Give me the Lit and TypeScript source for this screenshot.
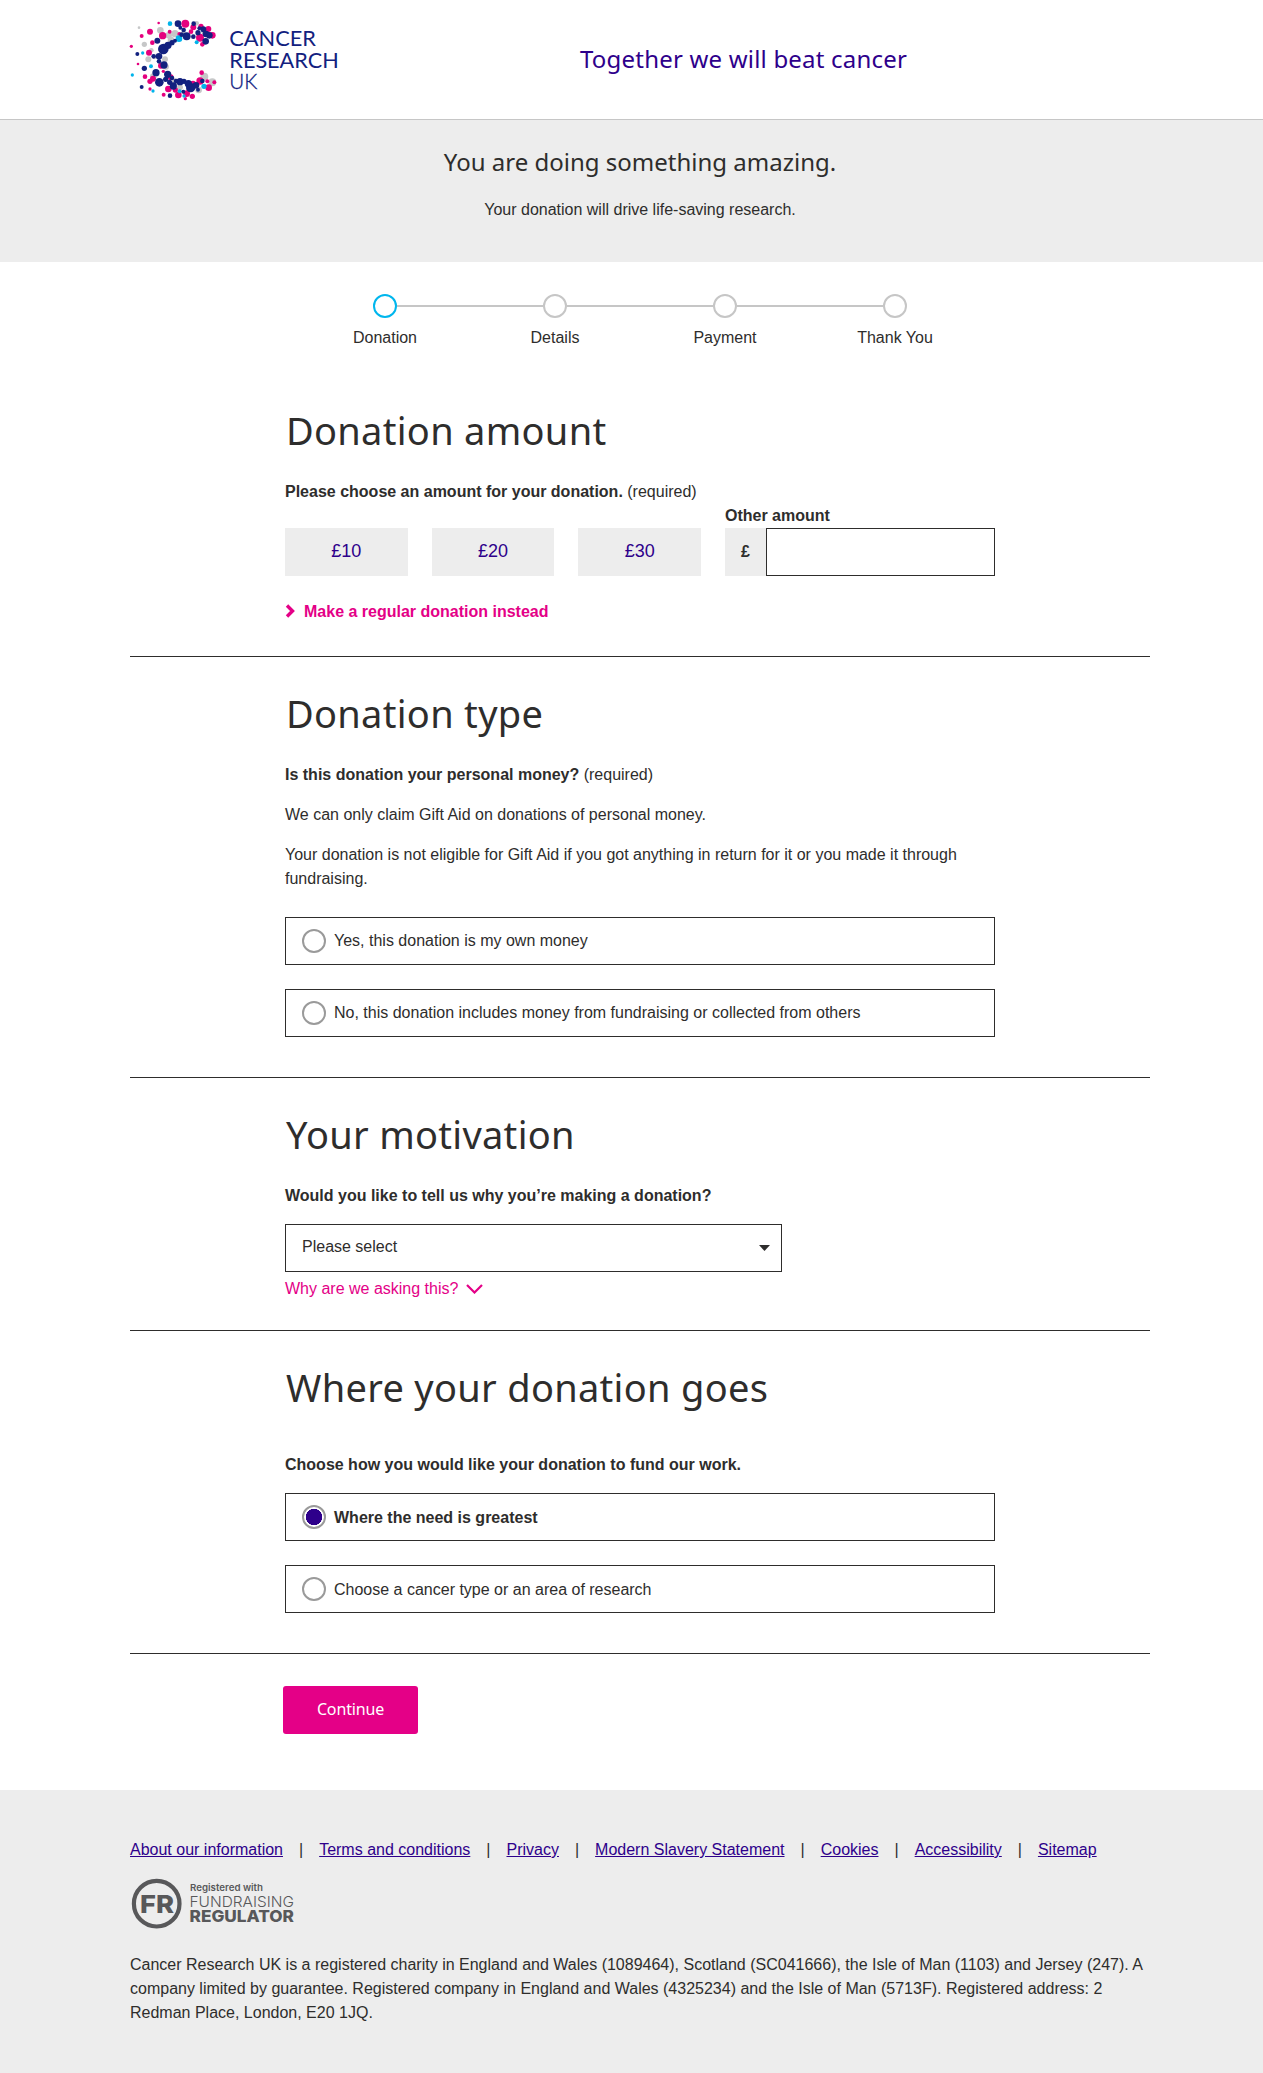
import { LitElement, html, svg, css } from "lit";
import { customElement, property } from "lit/decorators.js";

type Dot = [number, number, number];

const GREY: Dot[] = [
  [57, 53, 3], [121, 61, 9], [73, 103, 7], [85, 148, 8], [103, 141, 6], [94, 121, 6], [146, 76, 9], [165, 71, 10],
  [153, 90, 9], [135, 148, 8], [138, 170, 8], [230, 40, 6], [253, 200, 11], [277, 217, 11], [236, 240, 9],
  [100, 200, 9], [165, 214, 8], [180, 232, 8], [205, 240, 6], [253, 65, 8], [190, 70, 6],
];
const PINK: Dot[] = [
  [116, 39, 3], [65, 78, 5], [90, 65, 8], [128, 77, 10], [149, 65, 5], [97, 98, 6], [34, 109, 4], [87, 128, 8],
  [54, 162, 3], [123, 167, 8], [130, 184, 4], [75, 200, 6], [99, 206, 8], [90, 214, 7], [152, 202, 8], [196, 41, 11],
  [220, 52, 8], [243, 49, 7], [265, 57, 8], [277, 76, 9], [240, 83, 11], [247, 103, 6], [213, 65, 6], [178, 72, 5],
  [245, 188, 6], [240, 213, 10], [219, 221, 8], [266, 233, 9], [283, 217, 5], [200, 251, 9], [175, 255, 9],
  [145, 237, 9], [131, 254, 5], [90, 237, 4], [217, 259, 7], [196, 266, 4], [166, 240, 7], [262, 214, 5],
];
const CYAN: Dot[] = [
  [150, 41, 6], [177, 86, 9], [68, 129, 4], [93, 169, 5], [37, 195, 4], [99, 243, 4], [179, 244, 5], [252, 229, 7],
  [230, 97, 5], [192, 258, 4],
];
const NAVY: Dot[] = [
  [174, 41, 9], [191, 60, 6], [221, 41, 6], [200, 79, 11], [181, 53, 5], [250, 58, 8], [258, 72, 9], [268, 76, 9],
  [257, 94, 9], [234, 68, 7], [220, 80, 6], [238, 55, 5], [130, 117, 15], [144, 106, 10], [156, 98, 7], [165, 92, 5],
  [185, 74, 6], [112, 92, 8], [117, 139, 9], [52, 132, 5], [132, 165, 10], [117, 154, 6], [101, 139, 6], [73, 175, 7],
  [108, 188, 10], [143, 193, 10], [65, 231, 5], [118, 217, 12], [160, 228, 10], [149, 217, 7], [180, 215, 10],
  [192, 214, 7], [212, 233, 13], [205, 221, 10], [228, 226, 9], [247, 213, 6], [150, 257, 6], [137, 208, 7],
  [156, 204, 6], [168, 213, 6], [234, 239, 5], [190, 245, 5],
];

const dots = (list: Dot[], fill: string) =>
  svg`<g fill=${fill}>${list.map(([x, y, r]) => svg`<circle cx=${x} cy=${y} r=${r + 0.9}></circle>`)}</g>`;

@customElement("brand-logo")
export class BrandLogo extends LitElement {
  static styles = css`
    :host { display: block; width: 230px; height: 100px; }
    svg { display: block; }
    .word { font-family: Lato, "Liberation Sans", sans-serif; font-size: 64px; fill: #12217f; }
    .thin { font-weight: 300; stroke: #12217f; stroke-width: 1; }
  `;
  render() {
    return html`<svg width="230" height="100" viewBox="0 0 690 300" role="img">
      ${dots(GREY, "#c6c7c8")}${dots(PINK, "#e5007e")}${dots(CYAN, "#00b4eb")}${dots(NAVY, "#12217f")}
      <text class="word" x="328" y="107" textLength="260" lengthAdjust="spacingAndGlyphs">CANCER</text>
      <text class="word" x="328" y="173" textLength="328" lengthAdjust="spacingAndGlyphs">RESEARCH</text>
      <text class="word thin" x="328" y="237" textLength="84" lengthAdjust="spacingAndGlyphs">UK</text>
    </svg>`;
  }
}

@customElement("regulator-badge")
export class RegulatorBadge extends LitElement {
  static styles = css`
    :host { display: block; width: 166px; height: 54px; }
    svg { display: block; }
    text { font-family: Inter, "Liberation Sans", sans-serif; fill: #58585a; }
    .fr { font-size: 25px; font-weight: 800; }
    .small { font-size: 9.4px; font-weight: 600; }
    .light { font-size: 15px; font-weight: 300; }
    .heavy { font-size: 16.3px; font-weight: 800; }
  `;
  render() {
    return html`<svg width="166" height="54" viewBox="0 0 166 54" role="img">
      <circle cx="26.7" cy="26.7" r="22.8" fill="none" stroke="#58585a" stroke-width="4.2"></circle>
      <text class="fr" x="10" y="36" textLength="34" lengthAdjust="spacingAndGlyphs">FR</text>
      <text class="small" x="60" y="13.7" textLength="73" lengthAdjust="spacingAndGlyphs">Registered with</text>
      <text class="light" x="59.5" y="30" textLength="104.5" lengthAdjust="spacingAndGlyphs">FUNDRAISING</text>
      <text class="heavy" x="59.5" y="45.2" textLength="104.5" lengthAdjust="spacingAndGlyphs">REGULATOR</text>
    </svg>`;
  }
}

@customElement("progress-steps")
export class ProgressSteps extends LitElement {
  @property({ type: Number }) current = 0;
  static styles = css`
    :host { display: block; }
    .steps { display: grid; grid-template-columns: repeat(4, 170px); margin: 0; padding: 0; list-style: none; }
    .step { display: flex; flex-direction: column; align-items: center; }
    .track { display: flex; align-items: center; width: 100%; height: 24px; }
    .line { flex: 1; height: 2px; background: #c6c6c6; }
    .step:first-child .line:first-child, .step:last-child .line:last-child { background: transparent; }
    .dot { box-sizing: border-box; width: 24px; height: 24px; border: 2px solid #c6c6c6; border-radius: 50%; }
    .dot.on { border-color: #00b6ed; }
    .label { margin-top: 8px; line-height: 24px; }
  `;
  render() {
    return html`<ol class="steps">
      ${["Donation", "Details", "Payment", "Thank You"].map(
        (s, i) => html`<li class="step">
          <div class="track">
            <span class="line"></span><span class="dot ${i === this.current ? "on" : ""}"></span><span class="line"></span>
          </div>
          <span class="label">${s}</span>
        </li>`
      )}
    </ol>`;
  }
}

@customElement("radio-list")
export class RadioList extends LitElement {
  @property({ attribute: false }) options: string[] = [];
  @property({ type: Number }) selected = -1;
  static styles = css`
    :host { display: flex; flex-direction: column; gap: 24px; }
    .option {
      box-sizing: border-box; height: 48px; border: 1px solid #2e2d2c; padding: 0 16px; display: flex;
      align-items: center; gap: 8px; line-height: 24px;
    }
    .option.on { font-weight: bold; }
    .text { padding-top: var(--text-drop, 0); }
    .radio {
      appearance: none; box-sizing: border-box; margin: 0; width: 24px; height: 24px; border: 2px solid #9a9a9a;
      border-radius: 50%; background: #fff;
    }
    .radio:checked { background: radial-gradient(circle closest-side, #2e008b 79%, #fff 84%); }
  `;
  render() {
    return this.options.map(
      (o, i) => html`<label class="option ${i === this.selected ? "on" : ""}">
        <input class="radio" type="radio" name="choice" ?checked=${i === this.selected} /><span class="text">${o}</span>
      </label>`
    );
  }
}

const LINKS = [
  "About our information", "Terms and conditions", "Privacy", "Modern Slavery Statement", "Cookies",
  "Accessibility", "Sitemap",
];

@customElement("app-root")
export class AppRoot extends LitElement {
  static styles = css`
    :host {
      display: block; background: #fff; color: #2e2d2c; font: 16px/24px "Liberation Sans", Arial, sans-serif;
      overflow: hidden;
    }
    h1, h2, p { margin: 0; font-weight: normal; }
    .wrap { width: 1020px; margin-left: 130px; }
    .column { width: 710px; margin-left: 155px; }
    .display { font-family: "Noto Sans", "Open Sans", sans-serif; }

    .header { box-sizing: border-box; height: 120px; border-bottom: 1px solid #c6c6c6; display: flex; padding-left: 120px; }
    .logo { margin-top: 10px; }
    .strap { margin: 41px 0 0 230px; font-size: 24px; line-height: 36px; color: #2e008b; letter-spacing: 0.2px; }

    .banner { box-sizing: border-box; height: 142px; background: #ededed; }
    .banner .wrap { display: flex; flex-direction: column; align-items: center; padding-top: 24px; }
    .banner h1 { font-size: 24px; line-height: 36px; }
    .banner p { margin-top: 18px; }

    .progress { margin: 32px 0 0 170px; }
    .section { border-bottom: 1px solid #2e2d2c; padding-top: 32px; }
    .section.first { padding-top: 56px; }
    .section h2 { font-size: 38px; line-height: 48px; white-space: nowrap; letter-spacing: 0.3px; text-indent: 1px; }
    .question { margin-top: 26px; font-weight: bold; }
    .question span { font-weight: normal; }
    .body { margin-top: 16px; }

    .amounts { display: grid; grid-template-columns: repeat(3, 1fr) 270px; gap: 24px; align-items: end; }
    .amount { background: #ededed; height: 48px; border: 0; padding: 0 0 2px; font: 18px/24px "Liberation Sans", Arial, sans-serif; color: #2e008b; }
    .other { display: flex; flex-direction: column; font-weight: bold; }
    .field { display: flex; height: 48px; }
    .pound { width: 41px; background: #ededed; display: flex; align-items: center; justify-content: center; }
    .input { flex: 1; min-width: 0; box-sizing: border-box; border: 1px solid #2e2d2c; border-radius: 0; background: #fff; }
    .regular { display: flex; align-items: center; gap: 9px; margin: 24px 0 32px; color: #e40087; font-weight: bold; }
    .regular svg { margin-top: -3px; }

    .pick { display: flex; align-items: center; justify-content: space-between; box-sizing: border-box; width: 497px; height: 48px; margin-top: 16px; border: 1px solid #2e2d2c; padding: 0 11px 0 16px; }
    .pick .value { margin-top: -2px; }
    .why { display: flex; align-items: center; gap: 8px; margin: 5px 0 29px; color: #e40087; }
    .type-options { margin: 26px 0 40px; }
    .area-question { margin-top: 42px; }
    .area-options { margin: 16px 0 40px; --text-drop: 2px; }
    .continue { display: block; margin: 32px 0 56px 153px; width: 135px; height: 48px; border: 0; border-radius: 3px; background: #e40087; color: #fff; font-size: 16px; letter-spacing: -0.15px; padding: 0 0 2px; }

    .footer { box-sizing: border-box; background: #ededed; padding-top: 48px; height: 283px; }
    .links { display: flex; gap: 16px; white-space: nowrap; }
    .links a { color: #2e008b; text-decoration: underline; }
    .badge { margin-top: 15px; }
    .legal { margin-top: 22px; }
    svg { display: block; }
  `;

  render() {
    return html`
      <header class="header">
        <brand-logo class="logo"></brand-logo>
        <p class="strap display">Together we will beat cancer</p>
      </header>
      <div class="banner"><div class="wrap">
        <h1 class="display">You are doing something amazing.</h1>
        <p>Your donation will drive life-saving research.</p>
      </div></div>
      <main class="wrap">
        <progress-steps class="progress"></progress-steps>

        <section class="section first"><div class="column">
          <h2 class="display">Donation amount</h2>
          <p class="question">Please choose an amount for your donation. <span>(required)</span></p>
          <div class="amounts">
            ${[10, 20, 30].map((n) => html`<button class="amount">£${n}</button>`)}
            <label class="other">
              <span>Other amount</span>
              <span class="field"><span class="pound">£</span><input class="input" type="text" /></span>
            </label>
          </div>
          <div class="regular">
            <svg width="10" height="14" viewBox="0 0 10 14"><path d="M2 1.5L7.5 7L2 12.5" fill="none" stroke="#e40087" stroke-width="3.4"></path></svg>
            <span>Make a regular donation instead</span>
          </div>
        </div></section>

        <section class="section"><div class="column">
          <h2 class="display">Donation type</h2>
          <p class="question">Is this donation your personal money? <span>(required)</span></p>
          <p class="body">We can only claim Gift Aid on donations of personal money.</p>
          <p class="body">Your donation is not eligible for Gift Aid if you got anything in return for it or you made it through fundraising.</p>
          <radio-list class="type-options" .options=${[
            "Yes, this donation is my own money",
            "No, this donation includes money from fundraising or collected from others",
          ]}></radio-list>
        </div></section>

        <section class="section"><div class="column">
          <h2 class="display">Your motivation</h2>
          <p class="question">Would you like to tell us why you’re making a donation?</p>
          <div class="pick" role="combobox">
            <span class="value">Please select</span>
            <svg width="11" height="6" viewBox="0 0 11 6"><path d="M0 0H11L5.5 6Z" fill="#2e2d2c"></path></svg>
          </div>
          <div class="why">
            <span>Why are we asking this?</span>
            <svg width="17" height="10" viewBox="0 0 17 10"><path d="M1 1L8.5 8.5L16 1" fill="none" stroke="#e40087" stroke-width="2.2"></path></svg>
          </div>
        </div></section>

        <section class="section"><div class="column">
          <h2 class="display">Where your donation goes</h2>
          <p class="question area-question">Choose how you would like your donation to fund our work.</p>
          <radio-list class="area-options" selected="0" .options=${[
            "Where the need is greatest",
            "Choose a cancer type or an area of research",
          ]}></radio-list>
        </div></section>

        <button class="continue display">Continue</button>
      </main>
      <footer class="footer"><div class="wrap">
        <nav class="links">
          ${LINKS.map((l, i) => html`${i ? html`<span>|</span>` : ""}<a>${l}</a>`)}
        </nav>
        <regulator-badge class="badge"></regulator-badge>
        <p class="legal">Cancer Research UK is a registered charity in England and Wales (1089464), Scotland (SC041666), the Isle of Man (1103) and Jersey (247). A company limited by guarantee. Registered company in England and Wales (4325234) and the Isle of Man (5713F). Registered address: 2 Redman Place, London, E20 1JQ.</p>
      </div></footer>
    `;
  }
}
